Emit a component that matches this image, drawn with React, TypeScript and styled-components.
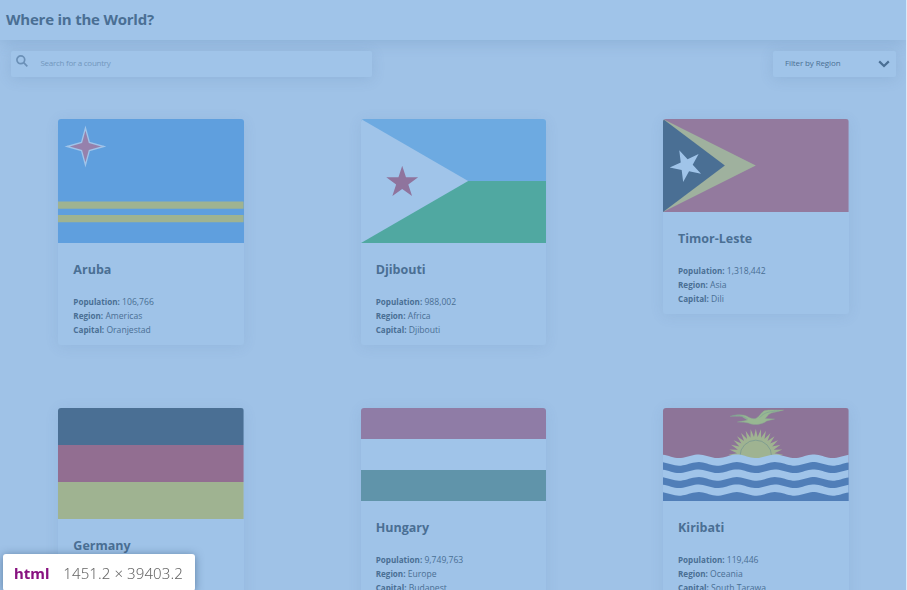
import React from "react";
import styled, { createGlobalStyle } from "styled-components";

const Global = createGlobalStyle`
  * { box-sizing: border-box; }
  html, body { margin: 0; height: 590px; overflow: hidden; background: #dbe9f8; }
  body { font-family: "Open Sans", "Noto Sans", sans-serif; color: #4a6f94; }
`;

const Page = styled.div`
  width: 906px;
  height: 590px;
  overflow: hidden;
  background: #9fc2e7;
`;

const Header = styled.header`
  display: flex;
  align-items: center;
  height: 40px;
  padding: 0 6px 2px;
  background: #a0c4e9;
  box-shadow: 0 2px 16px rgba(60, 100, 145, 0.2);
`;

const Fit = styled.span<{ $ls?: number }>`
  letter-spacing: ${(p) => p.$ls ?? 0}px;
  white-space: nowrap;
`;

const Heading = styled.h1`
  margin: 0;
  font-size: 15px;
  line-height: 20px;
  font-weight: 700;
`;

const Toolbar = styled.div`
  display: flex;
  justify-content: space-between;
  padding: 11px 10px 0 11px;
`;

const Field = styled.div<{ $width: number }>`
  display: flex;
  align-items: center;
  width: ${(p) => p.$width}px;
  height: 26px;
  border-radius: 2px;
  background: #a0c4e9;
  box-shadow: 0 2px 14px rgba(60, 100, 145, 0.15);
  font-size: 8px;
  line-height: 12px;
`;

const SearchField = styled(Field)`
  padding: 0 0 2px 5px;
  color: #7297bd;
  gap: 12.5px;
  svg { margin-top: -5px; }
`;

const RegionField = styled(Field)`
  justify-content: space-between;
  padding: 0 6px 2px 12px;
  svg { margin-top: 1px; }
`;

const Grid = styled.main`
  display: grid;
  grid-template-columns: repeat(3, 302.33px);
  grid-template-rows: 226px 260px;
  row-gap: 63px;
  justify-items: center;
  align-items: start;
  width: 907px;
  margin-top: 42px;
`;

const Card = styled.article`
  width: 185.6px;
  border-radius: 3px;
  overflow: hidden;
  background: #9fc3e8;
  box-shadow: 0 2px 14px rgba(60, 100, 145, 0.1);
`;

const FlagArt = styled.svg`
  display: block;
  width: 100%;
`;

const Details = styled.div`
  height: 102px;
  padding: 17px 15px 0;
`;

const Name = styled.h2`
  margin: 0 0 15px;
  font-size: 12.5px;
  line-height: 20px;
  font-weight: 700;
`;

const Fact = styled.p`
  margin: 0;
  height: 14px;
  line-height: 14px;
  font-size: 8.6px;
  white-space: nowrap;
`;

const Label = styled.b`
  font-size: 8.1px;
`;

const Tip = styled.div`
  position: fixed;
  left: 3px;
  top: 554px;
  width: 192px;
  height: 37px;
  display: flex;
  align-items: center;
  gap: 14px;
  padding: 0 11px;
  border-radius: 3px;
  background: #fff;
  box-shadow: 0 1px 8px rgba(30, 60, 95, 0.5);
  font-family: "Noto Sans", sans-serif;
  font-size: 15px;
  font-weight: 300;
  color: #666;
`;

const Tag = styled.span`
  font-weight: 700;
  color: #881280;
`;

const star = (cx: number, cy: number, r: number, turn: number) =>
  Array.from({ length: 10 }, (_, i) => {
    const a = ((turn + i * 36) * Math.PI) / 180;
    const d = i % 2 ? r * 0.382 : r;
    return `${cx + d * Math.sin(a)},${cy - d * Math.cos(a)}`;
  }).join(" ");

const Flag = ({ height, children }: { height: number; children: React.ReactNode }) => (
  <FlagArt height={height} viewBox={`0 0 186 ${height}`} preserveAspectRatio="none">
    {children}
  </FlagArt>
);

const Aruba = () => (
  <Flag height={124}>
    <rect width="187" height="124" fill="#5f9fde" />
    <path d="M0 82.5h186v7.3H0zM0 96h186v7.3H0z" fill="#9fb391" />
    <path d="M27.5 9L31.4 23.5L46 27.5L31.4 31.5L27.5 46L23.6 31.5L9 27.5L23.6 23.5Z" fill="#9681ac" stroke="#a0c4e9" strokeWidth="1.3" />
  </Flag>
);

const Djibouti = () => (
  <Flag height={124}>
    <rect width="186" height="62" fill="#6daae1" />
    <rect y="62" width="186" height="62" fill="#50a8a1" />
    <path d="M0 0L107.4 62L0 124Z" fill="#a0c4e9" />
    <polygon points={star(41.3, 63.5, 16.8, 0)} fill="#8f749d" />
  </Flag>
);

const Timor = () => (
  <Flag height={93}>
    <rect width="186" height="93" fill="#937a9e" />
    <path d="M0 0L93 46.5L0 93Z" fill="#9fb19e" />
    <path d="M0 0L62 46.5L0 93Z" fill="#4a6f94" />
    <polygon points={star(23.4, 46.5, 16.8, -25)} fill="#a0c4e9" />
  </Flag>
);

const Germany = () => (
  <Flag height={111}>
    <rect width="186" height="37" fill="#4a6f94" />
    <rect y="37" width="186" height="37" fill="#926e91" />
    <rect y="74" width="186" height="37" fill="#9fb391" />
  </Flag>
);

const Hungary = () => (
  <Flag height={93}>
    <rect width="186" height="31" fill="#8f7ca6" />
    <rect y="31" width="186" height="31" fill="#a0c4e9" />
    <rect y="62" width="186" height="31" fill="#6094aa" />
  </Flag>
);

const wave = (y: number) => {
  const pts: string[] = [];
  for (let x = 0; x <= 186; x += 2) {
    pts.push(`${x},${(y - 1.8 * Math.cos(((x - 35.5) * 2 * Math.PI) / 38.5)).toFixed(2)}`);
  }
  return `0,93 ${pts.join(" ")} 186,93`;
};

const rays = Array.from({ length: 35 }, (_, i) => {
  const a = Math.PI + ((i - 0.5) * Math.PI) / 33;
  const r = i % 2 ? 27.3 : 19;
  return `${(93 + r * Math.cos(a)).toFixed(2)},${(48 + r * Math.sin(a)).toFixed(2)}`;
}).join(" ");

const Kiribati = () => (
  <Flag height={93}>
    <rect width="186" height="93" fill="#8d7498" />
    <polygon points={rays} fill="#9fb391" />
    <circle cx="93" cy="48" r="15.8" fill="#9fb391" stroke="#7e9c91" strokeWidth="0.9" />
    <path
      d="M67.3 8.3C73 6.4 81 5.7 85.5 9C88 10.2 90.5 11 93 10.5C97 8 98.5 4 102 2.5C108 1.3 115 2.4 121 2C115 4 109 4.2 106 6.5L102.5 10.5L112 11L104 13C99 17 91 17.6 85.5 15L81 14.2L74.5 14L81.5 12.8L84.5 12L79 8.5C75 7.9 71 8.4 67.3 8.3Z"
      fill="#98b792"
      stroke="#88a795"
      strokeWidth="0.4"
    />
    <path d="M69 8.1C75 6.3 80 8 85 11M97 9.5C101 5 104 3.8 116 2.9" fill="none" stroke="#789f98" strokeWidth="0.6" />
    {[48.3, 55.9, 63.3, 70.9, 78.3, 85.9].map((y, i) => (
      <polygon key={y} points={wave(y)} fill={i % 2 ? "#507eb8" : "#a0c4e9"} />
    ))}
  </Flag>
);

type Country = { name: string; population: string; region: string; capital: string; Art: React.FC };

const countries: Country[] = [
  { name: "Aruba", population: "106,766", region: "Americas", capital: "Oranjestad", Art: Aruba },
  { name: "Djibouti", population: "988,002", region: "Africa", capital: "Djibouti", Art: Djibouti },
  { name: "Timor-Leste", population: "1,318,442", region: "Asia", capital: "Dili", Art: Timor },
  { name: "Germany", population: "83,240,525", region: "Europe", capital: "Berlin", Art: Germany },
  { name: "Hungary", population: "9,749,763", region: "Europe", capital: "Budapest", Art: Hungary },
  { name: "Kiribati", population: "119,446", region: "Oceania", capital: "South Tarawa", Art: Kiribati },
];

export default function App() {
  return (
    <>
      <Global />
      <Page>
        <Header>
          <Heading><Fit $ls={-0.22}>Where in the World?</Fit></Heading>
        </Header>
        <Toolbar>
          <SearchField $width={361}>
            <svg width="12" height="12" viewBox="0 0 12 12" fill="none" stroke="#6b90b7" strokeWidth="1.7">
              <circle cx="4.8" cy="4.8" r="3.9" />
              <path d="M7.7 7.7L11.3 11.3" />
            </svg>
            <Fit $ls={-0.27}>Search for a country</Fit>
          </SearchField>
          <RegionField $width={123}>
            <Fit $ls={-0.12}>Filter by Region</Fit>
            <svg width="12" height="8" viewBox="0 0 12 8" fill="none" stroke="#4a6f94" strokeWidth="2.2">
              <path d="M1.2 1.4L6 6L10.8 1.4" />
            </svg>
          </RegionField>
        </Toolbar>
        <Grid>
          {countries.map(({ name, population, region, capital, Art }) => (
            <Card key={name}>
              <Art />
              <Details>
                <Name>{name}</Name>
                <Fact><Label>Population:</Label> {population}</Fact>
                <Fact><Label>Region:</Label> {region}</Fact>
                <Fact><Label>Capital:</Label> {capital}</Fact>
              </Details>
            </Card>
          ))}
        </Grid>
        <Tip><Tag>html</Tag><Fit $ls={0.1}>1451.2 × 39403.2</Fit></Tip>
      </Page>
    </>
  );
}
